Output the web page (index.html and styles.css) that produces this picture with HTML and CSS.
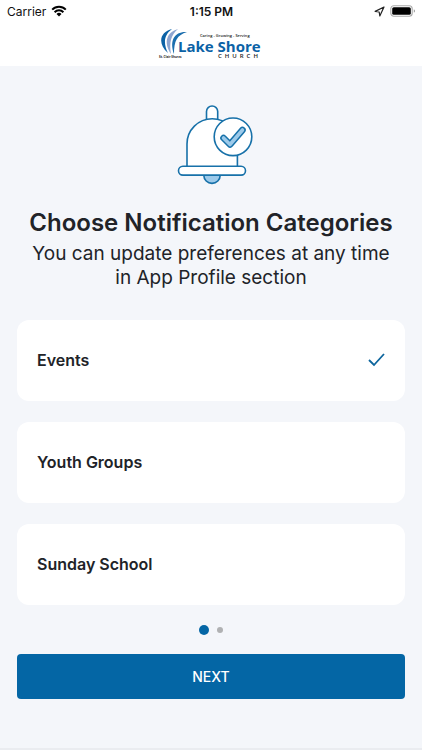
FILE: index.html
```
<!DOCTYPE html>
<html lang="en">
<head>
    <meta charset="UTF-8">
    <meta name="viewport" content="width=device-width, initial-scale=1.0">
    <title>Choose Notification Categories</title>
    <link rel="stylesheet" href="styles.css">
</head>
<body>
    <header class="header">
        <div class="status-bar">
            <div class="status-left">
                <span>Carrier</span>
                <svg class="wifi" viewBox="0 0 16 12" aria-hidden="true">
                    <path d="M1.2 4.6a9.6 9.6 0 0 1 13.6 0M3.6 7.2a6.2 6.2 0 0 1 8.8 0" fill="none" stroke="#000" stroke-width="2"/>
                    <path d="M8 11.4 5.5 9a3.6 3.6 0 0 1 5 0z"/>
                </svg>
            </div>
            <time class="status-time">1:15 PM</time>
            <div class="status-right">
                <svg class="location" viewBox="0 0 11 11" aria-hidden="true">
                    <path d="M10 1 1.2 5.4l4 .6.6 4z" fill="none" stroke="#222" stroke-width="1.2" stroke-linejoin="round"/>
                </svg>
                <svg class="battery" viewBox="0 0 26 12" aria-hidden="true">
                    <rect x=".8" y=".8" width="21.4" height="10.4" rx="3" fill="#fff" stroke="#aaa" stroke-width="1.1"/>
                    <rect x="2.2" y="2.2" width="18.6" height="7.6" rx="1.6"/>
                    <path d="M23.8 4.2v3.6q1.2-.5 1.2-1.8t-1.2-1.8z" fill="#999"/>
                </svg>
            </div>
        </div>
        <svg class="logo" viewBox="0 0 106 32" role="img" aria-label="Lake Shore Church">
            <path d="M14 1C2 4-1 15 10 25 5 15 6 7 14 1z" fill="#0b62a6"/>
            <path d="M20 1C9 4 5 14 13 26c-2-12 0-19 7-25z" fill="#8ea5d0"/>
            <path d="M29 4C17 3 11 12 16 26 16 13 19 7 29 4z" fill="#1b6eae"/>
            <text class="logo-small" x="42" y="9">Caring - Growing - Serving</text>
            <text class="logo-name" x="20" y="24">Lake Shore</text>
            <text class="logo-tiny" x="1" y="30">St. Clair Shores</text>
            <text class="logo-church" x="60" y="30">CHURCH</text>
        </svg>
    </header>

    <main class="content">
        <svg class="bell" viewBox="0 0 76 80" aria-hidden="true">
            <g fill="#fff" stroke="#1771a9" stroke-width="1.6">
                <path d="M29.5 22V6.6a5.6 5.6 0 0 1 11.2 0V22"/>
                <path d="M10 64V39a25.2 25.2 0 0 1 50.4 0v25z"/>
                <path d="M26.8 70.2a8.2 8.2 0 0 0 16.4 0z" fill="#9dcaea"/>
                <rect x="1.5" y="61.3" width="67" height="8.8" rx="4.4"/>
                <circle cx="56" cy="31.8" r="18.8"/>
            </g>
            <path d="M46.5 33l6.5 6.5L65.5 25" fill="none" stroke="#1771a9" stroke-width="6.6" stroke-linecap="round" stroke-linejoin="round"/>
            <path d="M46.5 33l6.5 6.5L65.5 25" fill="none" stroke="#9dcaea" stroke-width="3.6" stroke-linecap="round" stroke-linejoin="round"/>
        </svg>

        <h1 class="title">Choose Notification Categories</h1>
        <p class="subtitle">You can update preferences at any time in App Profile section</p>

        <form class="categories">
            <label class="category" for="events">
                <span>Events</span>
                <span class="check">
                    <input type="checkbox" id="events" checked>
                    <svg viewBox="0 0 18 14" aria-hidden="true"><path d="M2 7l5 5L17 1"/></svg>
                </span>
            </label>
            <label class="category" for="youth">
                <span>Youth Groups</span>
                <span class="check">
                    <input type="checkbox" id="youth">
                    <svg viewBox="0 0 18 14" aria-hidden="true"><path d="M2 7l5 5L17 1"/></svg>
                </span>
            </label>
            <label class="category" for="sunday">
                <span>Sunday School</span>
                <span class="check">
                    <input type="checkbox" id="sunday">
                    <svg viewBox="0 0 18 14" aria-hidden="true"><path d="M2 7l5 5L17 1"/></svg>
                </span>
            </label>
        </form>

        <div class="dots">
            <span class="dot active"></span>
            <span class="dot"></span>
        </div>

        <button type="button" class="next-btn">NEXT</button>
    </main>
    <footer class="bottom-edge"></footer>
</body>
</html>
```
FILE: styles.css
```
* {
    box-sizing: border-box;
}

body {
    margin: 0;
    min-height: 100vh;
    display: flex;
    flex-direction: column;
    font-family: Inter, "Liberation Sans", sans-serif;
    background-color: #f4f6fa;
    color: #212328;
}

.header {
    display: flex;
    flex-direction: column;
    align-items: center;
    gap: 6px;
    padding-bottom: 6px;
    background-color: #fff;
}

.status-bar {
    display: grid;
    grid-template-columns: 1fr auto 1fr;
    align-items: center;
    width: 100%;
    height: 22px;
    padding: 0 6px 0 7px;
    font-size: 12px;
    color: #111;
}

.status-left,
.status-right {
    display: flex;
    align-items: center;
    gap: 5px;
}

.status-right {
    justify-content: flex-end;
}

.status-time {
    font-weight: 600;
}

.wifi {
    width: 16px;
    height: 12px;
}

.location {
    width: 11px;
    height: 11px;
}

.battery {
    width: 26px;
    height: 12px;
}

.logo {
    width: 106px;
    height: 32px;
}

.logo text {
    font-family: "Open Sans", "Liberation Sans", sans-serif;
}

.logo-name {
    font-size: 15px;
    font-weight: 700;
    fill: #0b62a6;
}

.logo-small {
    font-size: 4px;
    font-weight: 600;
    fill: #222;
}

.logo-tiny {
    font-size: 3px;
    font-weight: 700;
    fill: #222;
}

.logo-church {
    font-size: 6px;
    font-weight: 600;
    letter-spacing: 3px;
    fill: #222;
}

.content {
    flex-grow: 1;
    display: flex;
    flex-direction: column;
    align-items: center;
    padding: 39px 17px 0 17px;
}

.bell {
    width: 76px;
    height: 80px;
    margin-left: 8px;
}

.title {
    margin: 22px 0 0;
    font-size: 24px;
    line-height: 32px;
    font-weight: 600;
    text-align: center;
}

.subtitle {
    max-width: 370px;
    margin: 3px 0 30px;
    font-size: 19px;
    line-height: 24px;
    text-align: center;
}

.categories {
    width: 100%;
    display: flex;
    flex-direction: column;
    gap: 21px;
}

.category {
    display: flex;
    align-items: center;
    justify-content: space-between;
    height: 81px;
    padding: 0 20px 2px;
    border-radius: 12px;
    background-color: #fff;
    font-size: 16px;
    font-weight: 600;
    cursor: pointer;
}

.check {
    display: grid;
}

.check input,
.check svg {
    grid-area: 1 / 1;
    width: 18px;
    height: 14px;
    margin: 0;
}

.check input {
    appearance: none;
    cursor: pointer;
}

.check svg {
    visibility: hidden;
    fill: none;
    stroke: #0d659d;
    stroke-width: 1.8;
    pointer-events: none;
}

.check input:checked + svg {
    visibility: visible;
}

.dots {
    display: flex;
    align-items: center;
    gap: 8px;
    height: 49px;
}

.dot {
    width: 6px;
    height: 6px;
    border-radius: 50%;
    background-color: #b0b1b3;
}

.dot.active {
    width: 10px;
    height: 10px;
    background-color: #0466a5;
}

.next-btn {
    width: 100%;
    height: 45px;
    border: none;
    border-radius: 4px;
    background-color: #0466a5;
    color: #fff;
    font-family: inherit;
    font-size: 14px;
    font-weight: 500;
    cursor: pointer;
}

.bottom-edge {
    height: 2px;
    background-color: #eaecf0;
}
```
